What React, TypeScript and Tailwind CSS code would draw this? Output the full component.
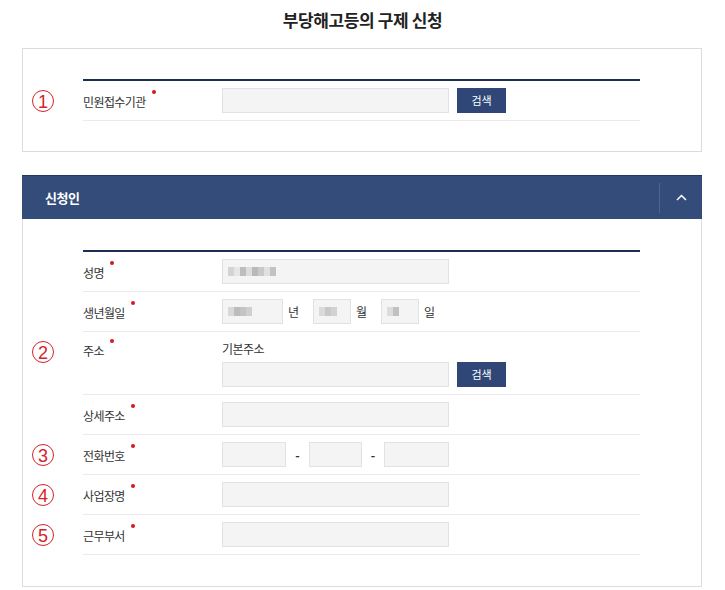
import React from "react";

const font = { fontFamily: '"Noto Sans CJK KR", "Noto Sans", sans-serif' };

function Num({ n }: { n: number }) {
  return (
    <div className="flex h-[22px] w-[22px] items-center justify-center rounded-full border-[1.6px] border-[#d4232a] pt-[1px] text-[18px] font-medium leading-none text-[#d4232a] [font-family:'Liberation_Sans',sans-serif]">
      {n}
    </div>
  );
}

function Label({ text }: { text: string }) {
  return (
    <span className="relative text-[12px] leading-[16px] tracking-[-0.6px] text-[#333]">
      {text}
      <span className="absolute -right-[10px] -top-[3px] h-[4px] w-[4px] rounded-full bg-[#cf1b22]" />
    </span>
  );
}

function Field({ w = "w-[227px]", children }: { w?: string; children?: React.ReactNode }) {
  return (
    <div className={`${w} flex h-[25px] items-center border border-[#e2e2e2] bg-[#f4f4f4] px-[5px]`}>
      {children}
    </div>
  );
}

function Mosaic({ cells }: { cells: string[] }) {
  // blurred personal data, drawn as a few grey blocks
  return (
    <div className="flex h-[9px] items-stretch blur-[0.6px]">
      {cells.map((c, i) => (
        <span key={i} className="w-[6px]" style={{ backgroundColor: c }} />
      ))}
    </div>
  );
}

function SearchBtn() {
  return (
    <button className="ml-[8px] h-[25px] w-[49px] bg-[#2f4677] text-[11px] leading-[25px] text-white">
      검색
    </button>
  );
}

function Row({
  num,
  label,
  top,
  children,
}: {
  num?: number;
  label: string;
  top?: boolean;
  children: React.ReactNode;
}) {
  return (
    <div className="flex">
      <div className={`flex w-[60px] pl-[9px] ${top ? "pt-[9px]" : "items-center"}`}>
        {num ? <Num n={num} /> : null}
      </div>
      <div
        className={`flex w-[557px] border-b border-[#ebebeb] pb-[7px] ${
          top ? "items-start pt-[8px]" : "items-center pt-[7px]"
        }`}
      >
        <div className="w-[139px] pt-[3px] text-[12px] leading-[16px]">
          <Label text={label} />
        </div>
        <div className="flex flex-col text-[12px] leading-[16px]">{children}</div>
      </div>
    </div>
  );
}

function NavyLine() {
  return <div className="ml-[60px] h-[2px] w-[557px] bg-[#1f2d52]" />;
}

export default function App() {
  return (
    <div className="w-[725px] bg-white pb-[4px]" style={font}>
      <div className="flex h-[48px] justify-center pt-[8px]">
        <h1 className="text-[17px] font-bold leading-[24px] tracking-[-0.4px] text-[#222]">
          부당해고등의 구제 신청
        </h1>
      </div>

      <div className="ml-[22px] w-[680px] border border-[#dcdcdc] pb-[30px] pt-[30px]">
        <NavyLine />
        <Row num={1} label="민원접수기관">
          <div className="flex">
            <Field />
            <SearchBtn />
          </div>
        </Row>
      </div>

      <div className="ml-[22px] mt-[23px] w-[680px]">
        <div className="flex h-[44px] items-center justify-between border-t border-[#24375f] bg-[#344c79] pl-[23px]">
          <span className="text-[13px] font-bold tracking-[-0.5px] text-white">신청인</span>
          <div className="flex h-[30px] w-[43px] items-center justify-center border-l border-[#4d6391]">
            <svg width="11" height="7" viewBox="0 0 11 7" fill="none">
              <polyline points="1,6 5.5,1.5 10,6" stroke="white" strokeWidth="1.5" />
            </svg>
          </div>
        </div>
        <div className="border-x border-b border-[#dcdcdc] pb-[31px] pt-[31px]">
          <NavyLine />
          <Row label="성명">
            <Field>
              <Mosaic cells={["#d4d4d4", "#e6e6e6", "#bdbdbd", "#dcdcdc", "#b8b8b8", "#c9c9c9", "#e0e0e0", "#c2c2c2"]} />
            </Field>
          </Row>
          <Row label="생년월일">
            <div className="flex items-center text-[#333]">
              <Field w="w-[61px]">
                <Mosaic cells={["#d8d8d8", "#bcbcbc", "#c4c4c4", "#cfcfcf"]} />
              </Field>
              <span className="ml-[5px] mr-[14px]">년</span>
              <Field w="w-[38px]">
                <Mosaic cells={["#dadada", "#c8c8c8", "#d2d2d2"]} />
              </Field>
              <span className="ml-[5px] mr-[14px]">월</span>
              <Field w="w-[38px]">
                <Mosaic cells={["#dcdcdc", "#c0c0c0"]} />
              </Field>
              <span className="ml-[5px]">일</span>
            </div>
          </Row>
          <Row num={2} label="주소" top>
            <div className="leading-[18px] tracking-[-0.5px] text-[#333]">기본주소</div>
            <div className="mt-[4px] flex">
              <Field />
              <SearchBtn />
            </div>
          </Row>
          <Row label="상세주소">
            <Field />
          </Row>
          <Row num={3} label="전화번호">
            <div className="flex items-center font-bold text-[#333]">
              <Field w="w-[64px]" />
              <span className="w-[23px] text-center">-</span>
              <Field w="w-[53px]" />
              <span className="w-[22px] text-center">-</span>
              <Field w="w-[65px]" />
            </div>
          </Row>
          <Row num={4} label="사업장명">
            <Field />
          </Row>
          <Row num={5} label="근무부서">
            <Field />
          </Row>
        </div>
      </div>
    </div>
  );
}
